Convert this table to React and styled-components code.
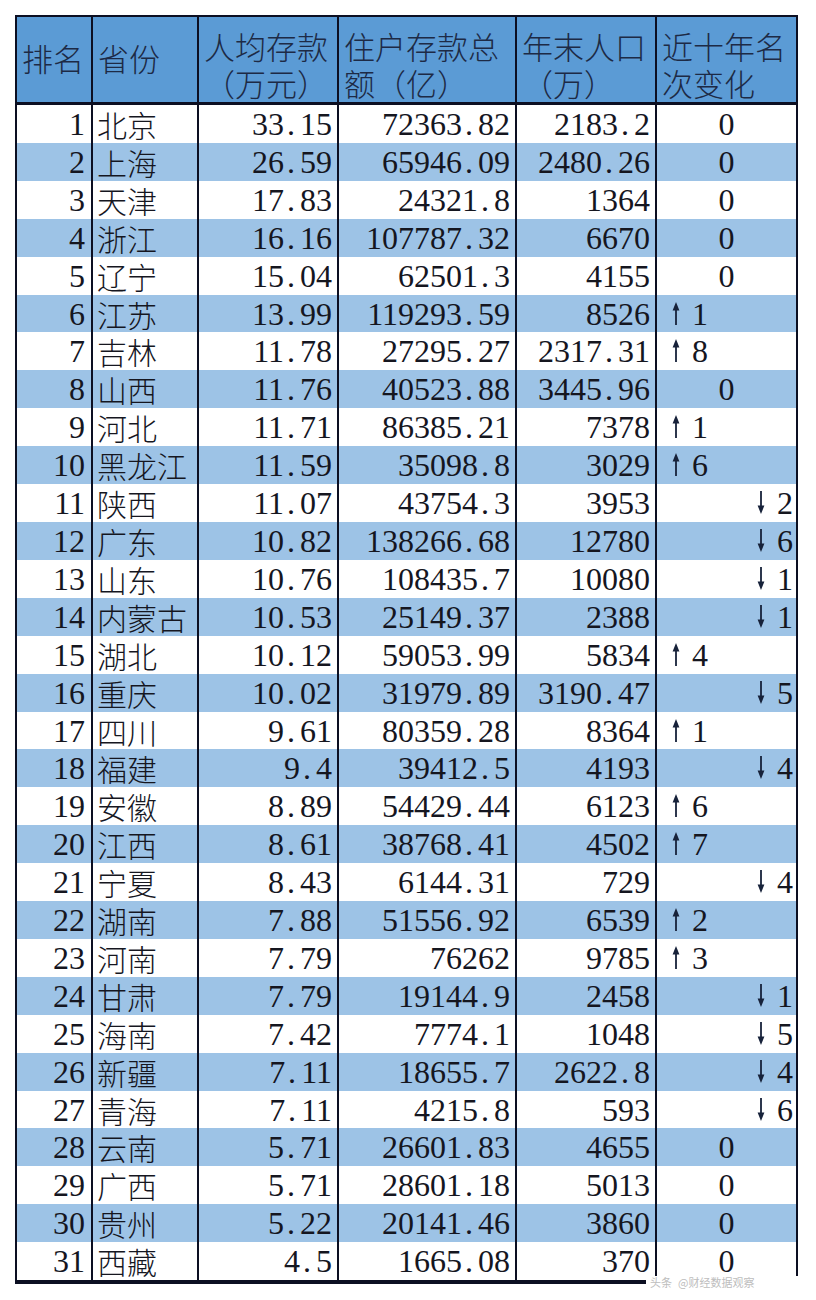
import React from "react";
import styled, { createGlobalStyle } from "styled-components";

const Global = createGlobalStyle`
  html, body { margin: 0; padding: 0; background: #ffffff; }
  body { font-family: "Liberation Serif", "Noto Sans CJK SC", serif; }
`;

const Page = styled.div`
  position: relative;
  width: 816px;
  height: 1300px;
  padding: 15px 0 0 15px;
  box-sizing: border-box;
  background: #fff;
`;

const Table = styled.table`
  box-sizing: border-box;
  width: 783px;
  table-layout: fixed;
  border-collapse: separate;
  border-spacing: 0;
  border: 2px solid #0c0f22;
  border-bottom-width: 4px;
  color: #15161f;
`;

const Th = styled.th`
  box-sizing: border-box;
  height: 88px;
  background: #5b9bd5;
  color: #1d2a45;
  font-family: "Noto Sans CJK SC", sans-serif;
  font-weight: 300;
  font-size: 31px;
  line-height: 37px;
  text-align: left;
  vertical-align: middle;
  padding: ${(p) => (p.$two ? "8px 0 0 5px" : "0 0 4px 5px")};
  border-right: ${(p) => (p.$last ? "none" : "2px solid #0c0f22")};
  border-bottom: 3px solid #0c0f22;
  white-space: nowrap;
`;

const Line = styled.span`
  display: block;
  height: 37px;
  line-height: 37px;
`;

const Tr = styled.tr`
  background: ${(p) => (p.$alt ? "#9dc3e6" : "#ffffff")};
`;

const Td = styled.td`
  box-sizing: border-box;
  height: 37.9px;
  padding: 2px ${(p) => p.$pr ?? 6}px 0 ${(p) => p.$pl ?? 4}px;
  line-height: 35.9px;
  font-size: ${(p) => (p.$cjk ? "30px" : "32px")};
  font-weight: ${(p) => (p.$cjk ? 300 : 400)};
  font-family: ${(p) =>
    p.$cjk ? '"Noto Sans CJK SC", sans-serif' : '"Liberation Serif", serif'};
  text-align: ${(p) => p.$align || "right"};
  border-right: ${(p) => (p.$last ? "none" : "2px solid #0c0f22")};
  white-space: nowrap;
`;

const Dot = styled.span`
  display: inline-block;
  width: 0.5em;
  padding-left: 0.09em;
  box-sizing: border-box;
  text-align: left;
`;

const ArrowBox = styled.span`
  display: inline-block;
  width: 1em;
  text-align: center;
  line-height: 1;
`;

const Watermark = styled.div`
  position: absolute;
  left: 646px;
  top: 1276px;
  width: 154px;
  height: 13px;
  background: #fff;
  display: flex;
  align-items: center;
  gap: 6px;
  padding-left: 4px;
  box-sizing: border-box;
  font-family: "Noto Sans CJK SC", sans-serif;
  font-size: 11px;
  line-height: 13px;
  color: #bdbdbd;
`;

const Num = ({ v }) => {
  const [a, b] = String(v).split(".");
  return (
    <>
      {a}
      {b !== undefined && (
        <>
          <Dot>.</Dot>
          {b}
        </>
      )}
    </>
  );
};

const Arrow = ({ up }) => (
  <ArrowBox>
    <svg width="8" height="23" viewBox="0 0 8 23" style={{ verticalAlign: "baseline" }}>
      {up ? (
        <>
          <rect x="3.1" y="6" width="1.8" height="17" fill="#17223a" />
          <polygon points="0.6,8.5 4,0 7.4,8.5" fill="#17223a" />
        </>
      ) : (
        <>
          <rect x="3.1" y="0" width="1.8" height="17" fill="#17223a" />
          <polygon points="0.6,14.5 4,23 7.4,14.5" fill="#17223a" />
        </>
      )}
    </svg>
  </ArrowBox>
);

const data = [
  [1, "北京", "33.15", "72363.82", "2183.2", "0"],
  [2, "上海", "26.59", "65946.09", "2480.26", "0"],
  [3, "天津", "17.83", "24321.8", "1364", "0"],
  [4, "浙江", "16.16", "107787.32", "6670", "0"],
  [5, "辽宁", "15.04", "62501.3", "4155", "0"],
  [6, "江苏", "13.99", "119293.59", "8526", "+1"],
  [7, "吉林", "11.78", "27295.27", "2317.31", "+8"],
  [8, "山西", "11.76", "40523.88", "3445.96", "0"],
  [9, "河北", "11.71", "86385.21", "7378", "+1"],
  [10, "黑龙江", "11.59", "35098.8", "3029", "+6"],
  [11, "陕西", "11.07", "43754.3", "3953", "-2"],
  [12, "广东", "10.82", "138266.68", "12780", "-6"],
  [13, "山东", "10.76", "108435.7", "10080", "-1"],
  [14, "内蒙古", "10.53", "25149.37", "2388", "-1"],
  [15, "湖北", "10.12", "59053.99", "5834", "+4"],
  [16, "重庆", "10.02", "31979.89", "3190.47", "-5"],
  [17, "四川", "9.61", "80359.28", "8364", "+1"],
  [18, "福建", "9.4", "39412.5", "4193", "-4"],
  [19, "安徽", "8.89", "54429.44", "6123", "+6"],
  [20, "江西", "8.61", "38768.41", "4502", "+7"],
  [21, "宁夏", "8.43", "6144.31", "729", "-4"],
  [22, "湖南", "7.88", "51556.92", "6539", "+2"],
  [23, "河南", "7.79", "76262", "9785", "+3"],
  [24, "甘肃", "7.79", "19144.9", "2458", "-1"],
  [25, "海南", "7.42", "7774.1", "1048", "-5"],
  [26, "新疆", "7.11", "18655.7", "2622.8", "-4"],
  [27, "青海", "7.11", "4215.8", "593", "-6"],
  [28, "云南", "5.71", "26601.83", "4655", "0"],
  [29, "广西", "5.71", "28601.18", "5013", "0"],
  [30, "贵州", "5.22", "20141.46", "3860", "0"],
  [31, "西藏", "4.5", "1665.08", "370", "0"],
];

const ChangeCell = ({ v }) => {
  if (v === "0")
    return (
      <Td $last $align="center" $pl={0} $pr={0}>
        0
      </Td>
    );
  const up = v[0] === "+";
  const n = v.slice(1);
  return (
    <Td $last $align={up ? "left" : "right"} $pl={3} $pr={3}>
      <Arrow up={up} />
      {n}
    </Td>
  );
};

export default function App() {
  return (
    <>
      <Global />
      <Page>
        <Table>
          <colgroup>
            <col style={{ width: 76 }} />
            <col style={{ width: 106 }} />
            <col style={{ width: 140 }} />
            <col style={{ width: 178 }} />
            <col style={{ width: 140 }} />
            <col style={{ width: 139 }} />
          </colgroup>
          <thead>
            <tr>
              <Th>排名</Th>
              <Th>省份</Th>
              <Th $two>
                <Line>人均存款</Line>
                <Line>（万元）</Line>
              </Th>
              <Th $two>
                <Line>住户存款总</Line>
                <Line>额（亿）</Line>
              </Th>
              <Th $two>
                <Line>年末人口</Line>
                <Line>（万）</Line>
              </Th>
              <Th $two $last>
                <Line>近十年名</Line>
                <Line>次变化</Line>
              </Th>
            </tr>
          </thead>
          <tbody>
            {data.map(([rank, prov, per, total, pop, chg]) => (
              <Tr key={rank} $alt={rank % 2 === 0}>
                <Td $pr={6}>{rank}</Td>
                <Td $cjk $align="left" $pl={4}>
                  {prov}
                </Td>
                <Td $pr={5}>
                  <Num v={per} />
                </Td>
                <Td $pr={5}>
                  <Num v={total} />
                </Td>
                <Td $pr={5}>
                  <Num v={pop} />
                </Td>
                <ChangeCell v={chg} />
              </Tr>
            ))}
          </tbody>
        </Table>
        <Watermark>
          <span>头条</span>
          <span>@财经数据观察</span>
        </Watermark>
      </Page>
    </>
  );
}
